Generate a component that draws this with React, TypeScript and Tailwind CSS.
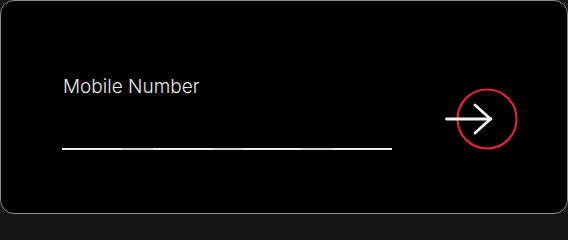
const segments = [
  { w: 60, bright: true },
  { w: 31, bright: false },
  { w: 60, bright: true },
  { w: 30, bright: false },
  { w: 58, bright: true },
  { w: 32, bright: false },
  { w: 59, bright: true },
]

const NextButton = () => {
  return (
    <button type="button" aria-label="Continue" className="mt-[13px] shrink-0">
      <svg width="74" height="64" viewBox="0 0 74 64" fill="none">
        <circle cx="42" cy="32" r="29.5" stroke="#e3213a" strokeWidth="2.2" />
        <path d="M1.5 32H46" stroke="#f2f2f2" strokeWidth="2.8" strokeLinecap="round" />
        <path
          d="M30 18L45.5 32L30 46"
          stroke="#f2f2f2"
          strokeWidth="2.8"
          strokeLinecap="round"
          strokeLinejoin="round"
        />
      </svg>
    </button>
  )
}

const App = () => {
  return (
    <div className="min-h-screen w-full bg-[#161616]">
      <div
        className="flex h-[214px] w-[568px] items-start rounded-[14px] border border-[#8a8a8a] bg-black pl-[61px] pr-[49px] pt-[73px]"
        style={{ fontFamily: 'Inter, "Noto Sans", sans-serif' }}
      >
        <div className="flex w-[330px] flex-col">
          <label className="pl-px text-[19px] font-light leading-[26px] tracking-[0px] text-[#e8e8e8]">
            Mobile Number
          </label>
          <div className="mt-[48px] flex h-[2px]">
            {segments.map((s, i) => (
              <div
                key={i}
                className={s.bright ? 'h-full bg-[#ececec]' : 'h-full bg-[#d2d2d2]'}
                style={{ width: s.w }}
              />
            ))}
          </div>
        </div>
        <div className="ml-[53px]">
          <NextButton />
        </div>
      </div>
    </div>
  )
}

export default App
